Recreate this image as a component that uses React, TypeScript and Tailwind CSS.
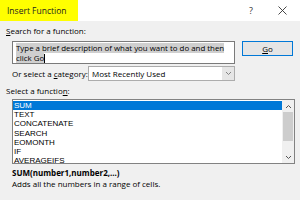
export default function App() {
  const funcs = ["SUM", "TEXT", "CONCATENATE", "SEARCH", "EOMONTH", "IF", "AVERAGEIFS"]
  return (
    <div
      className="w-[300px] h-[200px] overflow-hidden bg-[#f0f0f0] text-[#000] text-[8px] leading-[10px]"
      style={{ fontFamily: '"Open Sans", "Noto Sans", sans-serif' }}
    >
      {/* title bar */}
      <div className="h-[21px] bg-white flex items-stretch justify-between">
        <div className="w-[78px] bg-[#ffff00] flex items-center pl-[7px] text-[8.5px] text-[#222]">
          Insert Function
        </div>
        <div className="flex items-center gap-[25px] pr-[13px] text-[#333]">
          <span className="text-[9px]">?</span>
          <svg width="9" height="9" viewBox="0 0 9 9">
            <path d="M0.5 0.5 L8.5 8.5 M8.5 0.5 L0.5 8.5" stroke="#333" strokeWidth="0.9" />
          </svg>
        </div>
      </div>

      <div className="pl-[6px] pt-[5px]">
        <div>
          <span className="underline">S</span>earch for a function:
        </div>
        <div className="flex items-start mt-[5px] pl-[6px]">
          <div className="w-[223px] h-[23px] bg-white border border-[#7a7a7a] pl-[3px] pt-px leading-[10px] text-[7.9px] whitespace-nowrap overflow-hidden">
            <span className="bg-[#cfcfcf]">Type a brief description of what you want to do and then</span>
            <br />
            <span className="bg-[#cfcfcf]">click Go</span>
            <span className="inline-block w-px h-[9px] bg-black align-middle" />
          </div>
          <div className="ml-[7px] w-[51px] h-[15px] border border-[#0078d7] bg-[#e5e5e5] flex items-center justify-center">
            <span className="underline">G</span>o
          </div>
        </div>

        <div className="flex items-center mt-[2px] pl-[6px]">
          <span className="w-[76px] whitespace-nowrap">
            Or select a <span className="underline">c</span>ategory:
          </span>
          <div className="w-[147px] h-[15px] bg-white border border-[#acacac] flex items-center">
            <span className="flex-1 pl-[3px]">Most Recently Used</span>
            <div className="w-[12px] h-full bg-[#e6e6e6] flex items-center justify-center">
              <svg width="7" height="5" viewBox="0 0 7 5">
                <path d="M1 1 L3.5 3.5 L6 1" stroke="#777" fill="none" strokeWidth="0.9" />
              </svg>
            </div>
          </div>
        </div>

        <div className="mt-[5px]">
          Select a functio<span className="underline">n</span>:
        </div>

        <div className="ml-[6px] mt-[3px] w-[283px] h-[65px] bg-white border border-[#828282] flex">
          <div className="flex-1 pt-px" style={{ fontFamily: '"Liberation Sans", Arial, sans-serif' }}>
            {funcs.map((f, i) => (
              <div
                key={f}
                className={
                  i === 0
                    ? "h-[9.2px] leading-[9.2px] pl-px text-[8px] bg-[#0078d7] text-white"
                    : "h-[9.2px] leading-[9.2px] pl-px text-[8px]"
                }
              >
                {f}
              </div>
            ))}
          </div>
          <div className="w-[12px] bg-[#f0f0f0] flex flex-col items-center">
            <div className="h-[12px] flex items-center">
              <svg width="7" height="5" viewBox="0 0 7 5">
                <path d="M1 4 L3.5 1.5 L6 4" stroke="#555" fill="none" strokeWidth="1" />
              </svg>
            </div>
            <div className="w-[10px] h-[29px] bg-[#cdcdcd]" />
            <div className="flex-1" />
            <div className="h-[12px] flex items-center">
              <svg width="7" height="5" viewBox="0 0 7 5">
                <path d="M1 1 L3.5 3.5 L6 1" stroke="#555" fill="none" strokeWidth="1" />
              </svg>
            </div>
          </div>
        </div>

        <div className="pl-[6px] mt-[4px] font-bold">SUM(number1,number2,...)</div>
        <div className="pl-[6px] mt-px">Adds all the numbers in a range of cells.</div>
      </div>
    </div>
  )
}
